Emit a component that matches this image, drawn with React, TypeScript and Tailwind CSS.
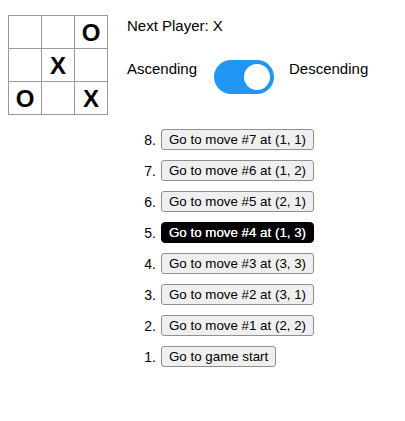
import React from "react";

const board: (string | null)[] = [null, null, "O", null, "X", null, "O", null, "X"];

const moves = [
  { n: 8, label: "Go to move #7 at (1, 1)" },
  { n: 7, label: "Go to move #6 at (1, 2)" },
  { n: 6, label: "Go to move #5 at (2, 1)" },
  { n: 5, label: "Go to move #4 at (1, 3)", current: true },
  { n: 4, label: "Go to move #3 at (3, 3)" },
  { n: 3, label: "Go to move #2 at (3, 1)" },
  { n: 2, label: "Go to move #1 at (2, 2)" },
  { n: 1, label: "Go to game start" },
];

const Square = ({ value }: { value: string | null }) => (
  <button className="w-[34px] h-[34px] -mr-px -mt-px border border-[#999] bg-white p-0 text-[24px] font-bold leading-[34px] text-black text-center font-['Liberation_Sans',Arial,sans-serif]">
    {value}
  </button>
);

export default function App() {
  return (
    <div className="flex p-2 bg-white text-black font-['Century_Gothic','Liberation_Sans',Arial,sans-serif]">
      {/* board */}
      <div className="mt-[8px] flex flex-col">
        {[0, 1, 2].map((r) => (
          <div key={r} className="flex">
            {[0, 1, 2].map((c) => (
              <Square key={c} value={board[r * 3 + c]} />
            ))}
          </div>
        ))}
      </div>

      {/* info */}
      <div className="ml-5 flex flex-col">
        <div className="mt-[9px] text-[15px] leading-[17px]">Next Player: X</div>

        <div className="mt-[26px] flex items-start text-[15px] leading-[17px]">
          <span className="w-[68px]">Ascending</span>
          <div className="ml-[19px] mr-[15px] w-[60px] h-[34px] rounded-full bg-[#2196F3] flex items-center justify-end p-1">
            <div className="w-[26px] h-[26px] rounded-full bg-white" />
          </div>
          <span>Descending</span>
        </div>

        <ol className="mt-[35px] flex flex-col gap-[10px]">
          {moves.map((m) => (
            <li key={m.n} className="flex items-center">
              <span className="w-[29px] text-right text-[14px] leading-[16px]">{m.n}.</span>
              <button
                className={
                  m.current
                    ? "ml-[5px] h-[21px] px-[7px] border border-black rounded-[4px] bg-black text-white text-[13.33px] leading-[15px] [text-shadow:0_0_0.6px_#fff] font-['Liberation_Sans',Arial,sans-serif] whitespace-nowrap"
                    : "ml-[5px] h-[21px] px-[7px] border border-[#8f8f8f] rounded-[3px] bg-[#efefef] text-black text-[13.33px] leading-[15px] font-['Liberation_Sans',Arial,sans-serif] whitespace-nowrap"
                }
              >
                {m.label}
              </button>
            </li>
          ))}
        </ol>
      </div>
    </div>
  );
}
